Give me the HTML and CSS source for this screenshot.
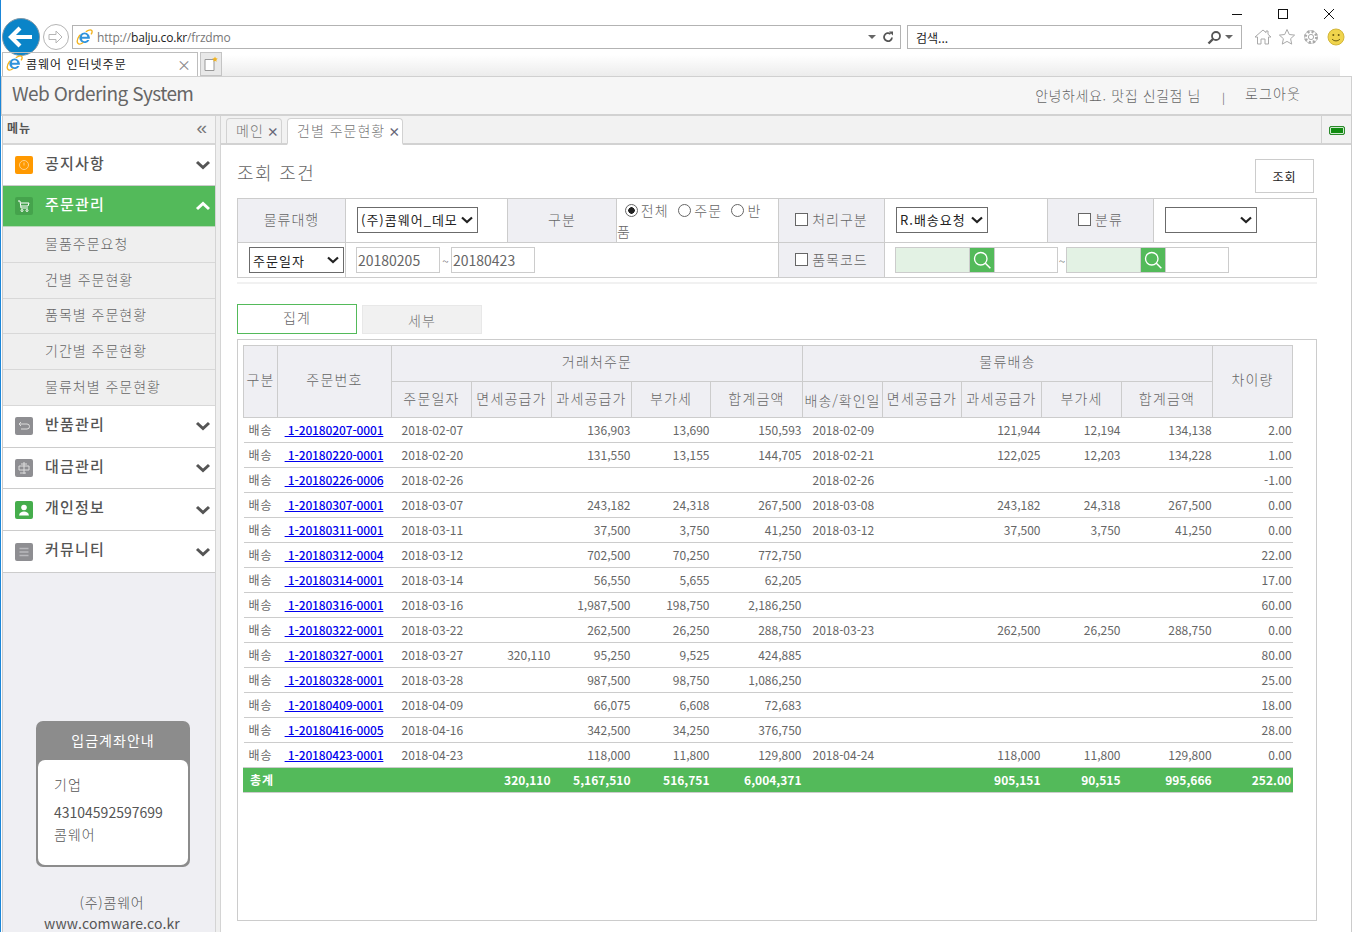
FILE: index.html
```html
<!DOCTYPE html>
<html lang="ko">
<head>
<meta charset="utf-8">
<title>콤웨어 인터넷주문</title>
<link rel="stylesheet" href="styles.css">
</head>
<body>
<svg class="defs" width="0" height="0" aria-hidden="true">
  <symbol id="ie" viewBox="0 0 20 20">
    <path d="M16 11.500H7a3.200 3.200 0 0 0 6 1.300h2.800A6.200 6.200 0 1 1 16.300 9.700v1.800zM7 9.200h6.200a3.100 3.100 0 0 0-6.200 0z" fill="#2f93dc"/>
    <path d="M4.600 6.800C1.800 10.800.8 15 2.200 16.800c1.200 1.500 3.800.8 6.200-1M11.500 3.200c3-1.900 5.900-2.600 7-1.400.8.900.4 2.700-.8 4.600" fill="none" stroke="#f2b21c" stroke-width="1.600"/>
  </symbol>
  <symbol id="chev" viewBox="0 0 16 10">
    <path d="M2 2l6 5.500L14 2" fill="none" stroke="currentColor" stroke-width="3"/>
  </symbol>
  <symbol id="lens" viewBox="0 0 24 24">
    <circle cx="10.500" cy="10.500" r="7.500" fill="none" stroke="#fff" stroke-width="1.600"/>
    <path d="M16 16l6 6" stroke="#fff" stroke-width="1.800"/>
  </symbol>
</svg>

<div class="page">
  <div class="winbar">
    <span class="cap"><svg width="12" height="12" viewBox="0 0 12 12"><path d="M1 6.500h10" stroke="#111"/></svg></span>
    <span class="cap"><svg width="12" height="12" viewBox="0 0 12 12"><rect x="1.500" y="1.500" width="9" height="9" fill="none" stroke="#111"/></svg></span>
    <span class="cap"><svg width="12" height="12" viewBox="0 0 12 12"><path d="M1 1l10 10M11 1L1 11" stroke="#111"/></svg></span>
  </div>

  <div class="navrow">
    <span class="back"><svg width="26" height="22" viewBox="0 0 26 22"><path d="M12 2L3 11l9 9M3.500 11H24" fill="none" stroke="#fff" stroke-width="4.200"/></svg></span>
    <span class="forward"><svg width="18" height="16" viewBox="0 0 18 16"><path d="M9 2l6 6-6 6v-3.500H2v-5h7z" fill="#fff" stroke="#b5b5b5"/></svg></span>
    <div class="addr">
      <svg class="ie-icon" width="17" height="17"><use href="#ie"/></svg>
      <span class="url">http://<b>balju.co.kr</b>/frzdmo</span>
      <span class="addr-tools"><i class="caret"></i><svg width="12" height="12" viewBox="0 0 12 12"><path d="M10 6.500A4 4 0 1 1 8.500 3" fill="none" stroke="#555" stroke-width="1.800"/><path d="M7 .5h4v4z" fill="#555"/></svg></span>
    </div>
    <div class="search">
      <span>검색...</span>
      <span class="addr-tools"><svg width="15" height="15" viewBox="0 0 15 15"><circle cx="9" cy="6" r="4" fill="none" stroke="#555" stroke-width="1.800"/><path d="M6 9l-4.500 4.500" stroke="#555" stroke-width="2.400"/></svg><i class="caret"></i></span>
    </div>
    <div class="tools">
      <svg width="18" height="18" viewBox="0 0 18 18"><path d="M1 9l8-7 3 2.600V3h2v3.300L17 9h-2.500v7H11v-5H7v5H3.500V9z" fill="#fff" stroke="#a9a9a9"/></svg>
      <svg width="18" height="18" viewBox="0 0 18 18"><path d="M9 1.500l2.300 5 5.300.6-4 3.600 1.100 5.400L9 13.400l-4.700 2.700 1.100-5.400-4-3.600 5.300-.6z" fill="#fff" stroke="#a9a9a9"/></svg>
      <svg width="18" height="18" viewBox="0 0 18 18"><circle cx="9" cy="9" r="5.500" fill="none" stroke="#a9a9a9" stroke-width="2.800" stroke-dasharray="2.200 2.100"/><circle cx="9" cy="9" r="6.400" fill="none" stroke="#a9a9a9" stroke-width=".7"/><circle cx="9" cy="9" r="2.600" fill="#fff" stroke="#a9a9a9"/></svg>
      <svg width="18" height="18" viewBox="0 0 18 18"><circle cx="9" cy="9" r="8" fill="#f0d44c" stroke="#d3b63a"/><circle cx="6.300" cy="7" r="1" fill="#6b5b10"/><circle cx="11.700" cy="7" r="1" fill="#6b5b10"/><path d="M5 11c2 2.500 6 2.500 8 0" fill="none" stroke="#6b5b10"/></svg>
    </div>
  </div>

  <div class="tabrow">
    <div class="ietab">
      <svg width="17" height="17"><use href="#ie"/></svg>
      <span class="ietab-text">콤웨어 인터넷주문</span>
      <span class="ietab-x">×</span>
    </div>
    <div class="newtab"><svg width="16" height="16" viewBox="0 0 16 16"><path d="M2 3.500h9v11H2z" fill="#fff" stroke="#999"/><path d="M12 .5l.8 1.800 1.900.3-1.400 1.300.4 1.900-1.700-1-1.700 1 .4-1.900-1.400-1.300 1.900-.3z" fill="#f2b21c"/></svg></div>
    <div class="tabshade"></div>
  </div>

  <header class="apphead">
    <div class="brand">Web Ordering System</div>
    <div class="user">
      <span class="hello">안녕하세요. 맛집 신길점 님</span>
      <span class="sep">|</span>
      <span class="logout">로그아웃</span>
    </div>
  </header>

  <div class="appbody">
    <aside class="side">
      <div class="side-head"><b>메뉴</b><span class="collapse">«</span></div>
      <nav class="menu">
        <a class="mi mi-short"><span class="mi-ico ico-orange"><svg width="12" height="12" viewBox="0 0 12 12"><circle cx="6" cy="6" r="4.500" fill="none" stroke="#ffd08a"/><path d="M6 3.500v3" stroke="#ffd08a"/></svg></span><span class="mi-label">공지사항</span><svg class="mi-chev" width="16" height="10"><use href="#chev"/></svg></a>
        <a class="mi mi-open"><span class="mi-ico ico-green"><svg width="14" height="14" viewBox="0 0 14 14"><path d="M1 2h2l1 7h7M3.500 4H12l-1 3H4" fill="none" stroke="#fff"/><circle cx="5" cy="11.500" r="1" fill="none" stroke="#fff"/><circle cx="10" cy="11.500" r="1" fill="none" stroke="#fff"/></svg></span><span class="mi-label">주문관리</span><svg class="mi-chev flip" width="16" height="10"><use href="#chev"/></svg></a>
        <a class="sub">물품주문요청</a>
        <a class="sub">건별 주문현황</a>
        <a class="sub">품목별 주문현황</a>
        <a class="sub">기간별 주문현황</a>
        <a class="sub">물류처별 주문현황</a>
        <a class="mi"><span class="mi-ico ico-gray"><svg width="14" height="14" viewBox="0 0 14 14"><path d="M4 10h6a2.500 2.500 0 0 0 0-5H2M4 3L2 5l2 2" fill="none" stroke="#ddd"/></svg></span><span class="mi-label">반품관리</span><svg class="mi-chev" width="16" height="10"><use href="#chev"/></svg></a>
        <a class="mi"><span class="mi-ico ico-gray"><svg width="14" height="14" viewBox="0 0 14 14"><path d="M7 1v12M2 5h10v4H2zM4 3h6M3 12h6" fill="none" stroke="#ddd"/></svg></span><span class="mi-label">대금관리</span><svg class="mi-chev" width="16" height="10"><use href="#chev"/></svg></a>
        <a class="mi"><span class="mi-ico ico-person"><svg width="14" height="14" viewBox="0 0 14 14"><circle cx="7" cy="4.500" r="2.800" fill="#fff"/><path d="M2 12.500c.5-3 2.500-4 5-4s4.500 1 5 4z" fill="#fff"/></svg></span><span class="mi-label">개인정보</span><svg class="mi-chev" width="16" height="10"><use href="#chev"/></svg></a>
        <a class="mi"><span class="mi-ico ico-gray"><svg width="14" height="14" viewBox="0 0 14 14"><path d="M2.500 3.500h9M2.500 7h9M2.500 10.500h9" stroke="#b9b9bd" stroke-width="1.600"/></svg></span><span class="mi-label">커뮤니티</span><svg class="mi-chev" width="16" height="10"><use href="#chev"/></svg></a>
      </nav>
      <div class="side-fill"></div>
      <section class="account">
        <h3>입금계좌안내</h3>
        <div class="account-body">
          <p class="a1">기업</p>
          <p class="a2">43104592597699</p>
          <p class="a3">콤웨어</p>
        </div>
      </section>
      <div class="corp">
        <div class="corp-name">(주)콤웨어</div>
        <div class="corp-url">www.comware.co.kr</div>
      </div>
    </aside>

    <div class="splitter"></div>

    <main class="main">
      <div class="tabbar">
        <div class="ptab ptab-a">메인<i>×</i></div>
        <div class="ptab ptab-b ptab-on">건별 주문현황<i>×</i></div>
        <div class="tabfill"></div>
        <div class="panelbtn"><span class="led"></span></div>
      </div>

      <div class="content">
        <div class="titlerow">
          <h2>조회 조건</h2>
          <button class="qbtn" type="button">조회</button>
        </div>

        <table class="filter">
          <colgroup><col class="f1"><col class="f2"><col class="f3"><col class="f4"><col class="f5"><col class="f6"><col class="f7"><col class="f8"></colgroup>
          <tr class="fr1">
            <th>물류대행</th>
            <td class="pl"><select class="sel sel-a"><option>(주)콤웨어_데모</option></select></td>
            <th>구분</th>
            <td class="radios">&nbsp;&nbsp;<input type="radio" name="k" checked><span>전체</span>&nbsp;&nbsp;<input type="radio" name="k"><span>주문</span>&nbsp;&nbsp;<input type="radio" name="k"><span>반</span><br>품</td>
            <th><input type="checkbox"><span>처리구분</span></th>
            <td class="pl"><select class="sel sel-b"><option>R.배송요청</option></select></td>
            <th><input type="checkbox"><span>분류</span></th>
            <td class="pl"><select class="sel sel-c"><option></option></select></td>
          </tr>
          <tr class="fr2">
            <td class="datecell"><select class="sel sel-d"><option>주문일자</option></select></td>
            <td colspan="3" class="dates"><input class="date" value="20180205"><span class="tilde">~</span><input class="date" value="20180423"></td>
            <th><input type="checkbox"><span>품목코드</span></th>
            <td colspan="3" class="codes">
              <div class="code"><span class="code-a"></span><span class="code-btn"><svg width="20" height="20"><use href="#lens"/></svg></span><span class="code-b"></span></div><span class="tilde">~</span><div class="code"><span class="code-a"></span><span class="code-btn"><svg width="20" height="20"><use href="#lens"/></svg></span><span class="code-b"></span></div>
            </td>
          </tr>
        </table>
        <div class="rule"></div>

        <div class="viewtabs">
          <div class="vt vt-on">집계</div>
          <div class="vt vt-off">세부</div>
        </div>

        <div class="gridbox">
          <table class="grid">
            <colgroup>
              <col class="c34"><col class="c114"><col class="c80"><col class="c80"><col class="c80"><col class="c79"><col class="c92"><col class="c80"><col class="c79"><col class="c80"><col class="c80"><col class="c91"><col class="c80">
            </colgroup>
            <thead>
              <tr class="h1">
                <th rowspan="2">구분</th><th rowspan="2">주문번호</th><th colspan="5">거래처주문</th><th colspan="5">물류배송</th><th rowspan="2">차이량</th>
              </tr>
              <tr class="h2">
                <th>주문일자</th><th>면세공급가</th><th>과세공급가</th><th>부가세</th><th>합계금액</th>
                <th class="tight">배송/확인일</th><th>면세공급가</th><th>과세공급가</th><th>부가세</th><th>합계금액</th>
              </tr>
            </thead>
            <tbody>
              <tr><td class="k">배송</td><td class="no"><a>&nbsp;1-20180207-0001</a></td><td class="d">2018-02-07</td><td></td><td>136,903</td><td>13,690</td><td>150,593</td><td class="d">2018-02-09</td><td></td><td>121,944</td><td>12,194</td><td>134,138</td><td>2.00</td></tr>
              <tr><td class="k">배송</td><td class="no"><a>&nbsp;1-20180220-0001</a></td><td class="d">2018-02-20</td><td></td><td>131,550</td><td>13,155</td><td>144,705</td><td class="d">2018-02-21</td><td></td><td>122,025</td><td>12,203</td><td>134,228</td><td>1.00</td></tr>
              <tr><td class="k">배송</td><td class="no"><a>&nbsp;1-20180226-0006</a></td><td class="d">2018-02-26</td><td></td><td></td><td></td><td></td><td class="d">2018-02-26</td><td></td><td></td><td></td><td></td><td>-1.00</td></tr>
              <tr><td class="k">배송</td><td class="no"><a>&nbsp;1-20180307-0001</a></td><td class="d">2018-03-07</td><td></td><td>243,182</td><td>24,318</td><td>267,500</td><td class="d">2018-03-08</td><td></td><td>243,182</td><td>24,318</td><td>267,500</td><td>0.00</td></tr>
              <tr><td class="k">배송</td><td class="no"><a>&nbsp;1-20180311-0001</a></td><td class="d">2018-03-11</td><td></td><td>37,500</td><td>3,750</td><td>41,250</td><td class="d">2018-03-12</td><td></td><td>37,500</td><td>3,750</td><td>41,250</td><td>0.00</td></tr>
              <tr><td class="k">배송</td><td class="no"><a>&nbsp;1-20180312-0004</a></td><td class="d">2018-03-12</td><td></td><td>702,500</td><td>70,250</td><td>772,750</td><td class="d"></td><td></td><td></td><td></td><td></td><td>22.00</td></tr>
              <tr><td class="k">배송</td><td class="no"><a>&nbsp;1-20180314-0001</a></td><td class="d">2018-03-14</td><td></td><td>56,550</td><td>5,655</td><td>62,205</td><td class="d"></td><td></td><td></td><td></td><td></td><td>17.00</td></tr>
              <tr><td class="k">배송</td><td class="no"><a>&nbsp;1-20180316-0001</a></td><td class="d">2018-03-16</td><td></td><td>1,987,500</td><td>198,750</td><td>2,186,250</td><td class="d"></td><td></td><td></td><td></td><td></td><td>60.00</td></tr>
              <tr><td class="k">배송</td><td class="no"><a>&nbsp;1-20180322-0001</a></td><td class="d">2018-03-22</td><td></td><td>262,500</td><td>26,250</td><td>288,750</td><td class="d">2018-03-23</td><td></td><td>262,500</td><td>26,250</td><td>288,750</td><td>0.00</td></tr>
              <tr><td class="k">배송</td><td class="no"><a>&nbsp;1-20180327-0001</a></td><td class="d">2018-03-27</td><td>320,110</td><td>95,250</td><td>9,525</td><td>424,885</td><td class="d"></td><td></td><td></td><td></td><td></td><td>80.00</td></tr>
              <tr><td class="k">배송</td><td class="no"><a>&nbsp;1-20180328-0001</a></td><td class="d">2018-03-28</td><td></td><td>987,500</td><td>98,750</td><td>1,086,250</td><td class="d"></td><td></td><td></td><td></td><td></td><td>25.00</td></tr>
              <tr><td class="k">배송</td><td class="no"><a>&nbsp;1-20180409-0001</a></td><td class="d">2018-04-09</td><td></td><td>66,075</td><td>6,608</td><td>72,683</td><td class="d"></td><td></td><td></td><td></td><td></td><td>18.00</td></tr>
              <tr><td class="k">배송</td><td class="no"><a>&nbsp;1-20180416-0005</a></td><td class="d">2018-04-16</td><td></td><td>342,500</td><td>34,250</td><td>376,750</td><td class="d"></td><td></td><td></td><td></td><td></td><td>28.00</td></tr>
              <tr><td class="k">배송</td><td class="no"><a>&nbsp;1-20180423-0001</a></td><td class="d">2018-04-23</td><td></td><td>118,000</td><td>11,800</td><td>129,800</td><td class="d">2018-04-24</td><td></td><td>118,000</td><td>11,800</td><td>129,800</td><td>0.00</td></tr>
            </tbody>
            <tfoot>
              <tr><td class="k">총계</td><td></td><td></td><td>320,110</td><td>5,167,510</td><td>516,751</td><td>6,004,371</td><td></td><td></td><td>905,151</td><td>90,515</td><td>995,666</td><td>252.00</td></tr>
            </tfoot>
          </table>
        </div>
      </div>
    </main>
  </div>
</div>
</body>
</html>
```
FILE: styles.css
```css
* { box-sizing: border-box; }
html, body { margin: 0; padding: 0; height: 932px; overflow: hidden; background: #fff; }
body { font-family: "Noto Sans CJK KR", "Noto Sans", sans-serif; font-size: 12px; color: #666; }
.defs { display: block; height: 0; }
.page { width: 1352px; height: 932px; border-left: 1px solid #1b86d8; display: flex; flex-direction: column; overflow: hidden; }

/* browser chrome */
.winbar { height: 19px; flex: none; display: flex; justify-content: flex-end; align-items: center; padding: 8px 0 0; }
.cap { width: 46px; display: flex; justify-content: center; line-height: 0; margin-top: 0; }
.navrow { height: 33px; flex: none; display: flex; align-items: center; }
.back { width: 38px; height: 38px; flex: none; border-radius: 50%; background: #0a84c8; border: 1px solid #7f98a8; display: flex; align-items: center; justify-content: center; margin: 3px 0 0 1px; }
.forward { width: 26px; height: 26px; flex: none; margin: 3px 3px 0 3px; border-radius: 50%; border: 1px solid #b5b5b5; display: flex; align-items: center; justify-content: center; }
.addr { width: 829px; height: 24px; flex: none; margin-top: 3px; border: 1px solid #b3b3b3; display: flex; align-items: center; padding: 0 6px 0 3px; }
.ie-icon { flex: none; }
.url { margin-left: 4px; font-family: "Open Sans", "Noto Sans", sans-serif; font-size: 12px; letter-spacing: -.17px; color: #777; }
.url b { font-weight: 400; color: #222; }
.addr-tools { margin-left: auto; display: flex; align-items: center; gap: 6px; }
.caret { display: inline-block; width: 0; height: 0; border: 4px solid transparent; border-top: 4px solid #666; border-bottom: 0; }
.search { width: 335px; height: 24px; flex: none; margin: 3px 0 0 6px; border: 1px solid #b3b3b3; display: flex; align-items: center; padding: 0 8px; font-size: 12px; color: #222; }
.search .addr-tools { gap: 3px; }
.tools { display: flex; gap: 6.200px; margin-left: 12px; margin-top: 2px; line-height: 0; }
.tabrow { height: 24px; flex: none; display: flex; align-items: stretch; padding-left: 1px; }
.ietab { width: 196px; border: 1px solid #bdbdbd; border-bottom: 0; display: flex; align-items: center; padding: 0 3px 2px 3px; gap: 3px; }
.ietab-text { font-size: 12px; color: #222; letter-spacing: 1px; }
.ietab-x { margin-left: auto; color: #888; font-size: 14px; line-height: 1; padding-right: 3px; }
.newtab { width: 22px; margin-left: 2px; background: #e8e8e8; border: 1px solid #c4c4c4; display: flex; align-items: center; justify-content: center; }
.tabshade { flex: 1; margin: 3px 12px 0 0; background: linear-gradient(#fff, #ececec); }

/* app header */
.apphead { height: 40px; flex: none; background: #f6f6f6; border: 1px solid #d0d0d0; border-width: 1px 1px 2px 1px; border-bottom-color: #d2d2d2; display: flex; align-items: center; padding-left: 10px; }
.brand { font-size: 19px; letter-spacing: -.6px; color: #666; margin-bottom: 6px; }
.user { margin-left: auto; display: flex; align-items: center; font-size: 14px; color: #666; padding-right: 50px; }
.hello { margin-bottom: 2px; letter-spacing: .6px; font-weight: 300; }
.sep { margin: 3px 20px 0 21px; font-size: 11px; color: #777; }
.logout { margin-bottom: 6px; letter-spacing: 1.1px; font-weight: 300; }

.appbody { flex: 1; min-height: 0; display: flex; padding-left: 1px; }

/* sidebar */
.side { width: 213px; flex: none; background: #efeff3; border-left: 1px solid #ccc; display: flex; flex-direction: column; }
.side-head { height: 29px; flex: none; display: flex; align-items: center; justify-content: space-between; padding: 0 8px 5px 4px; background: #f3f3f3; border-bottom: 2px solid #d6d6d6; font-size: 12px; color: #555; }
.side-head b { letter-spacing: 1px; }
.collapse { font-size: 19px; line-height: 1; color: #777; font-family: "Liberation Sans", sans-serif; }
.menu { flex: none; background: #fff; }
.mi { height: 41.750px; display: flex; align-items: center; padding: 0 4px 0 12px; border-bottom: 1px solid #ccc; background: #fff; color: #555; }
.mi-short { height: 41px; }
.mi-open { height: 41px; background: #53ba5a; color: #fff; border-bottom-color: #b8d8b8; }
.mi-ico { width: 18px; height: 18px; flex: none; border-radius: 2px; display: flex; align-items: center; justify-content: center; }
.ico-orange { background: #ff9900; }
.ico-green { background: #45a34c; }
.ico-gray { background: #8e8e92; }
.ico-person { background: #45ad4c; }
.mi-label { margin: 0 0 6px 12px; font-size: 15px; font-weight: 500; letter-spacing: 1.2px; }
.mi-chev { margin-left: auto; }
.flip { transform: rotate(180deg); color: #fff; }
.sub { height: 35.800px; display: flex; align-items: center; padding: 0 0 3px 42px; background: #efefef; border-bottom: 1px solid #d8d8d8; font-size: 14px; font-weight: 300; color: #666; letter-spacing: 1px; }
.side-fill { flex: 1; }
.account { width: 154px; height: 146px; flex: none; margin: 0 0 25px 33px; background: #8c8c8c; border-radius: 7px; padding: 0 2px 2px; display: flex; flex-direction: column; }
.account h3 { margin: 0; height: 39px; flex: none; display: flex; align-items: center; justify-content: center; padding-bottom: 2px; font-size: 14px; font-weight: 400; color: #fff; letter-spacing: 1px; }
.account-body { flex: 1; background: #fff; border-radius: 7px; padding: 14px 0 0 16px; color: #555; font-size: 14px; }
.account-body p { margin: 0; line-height: 20px; }
.a1, .a3 { letter-spacing: 1px; font-weight: 300; }
.a2 { margin-top: 8px !important; }
.a3 { margin-top: 2px !important; }
.corp { flex: none; height: 40px; padding-left: 6px; text-align: center; font-size: 14px; color: #555; }
.corp-name { line-height: 20px; letter-spacing: .8px; font-weight: 300; }
.corp-url { margin-top: 2px; line-height: 18px; letter-spacing: .1px; }

.splitter { width: 6px; flex: none; background: #efefef; border: 1px solid #d4d4d4; border-width: 0 1px; }

/* main */
.main { width: 1131px; flex: none; display: flex; flex-direction: column; border-right: 1px solid #ccc; }
.tabbar { height: 29px; flex: none; display: flex; align-items: flex-end; background: #f2f2f2; border-bottom: 2px solid #d2d2d2; padding-left: 5px; }
.ptab { height: 27px; margin-bottom: -2px; margin-right: 5px; padding: 0 0 2px 9px; border: 1px solid #d2d2d2; border-bottom: 2px solid #d2d2d2; border-radius: 4px 4px 0 0; font-size: 14px; font-weight: 300; color: #777; letter-spacing: 1px; display: flex; align-items: center; gap: 3px; }
.ptab i { font-style: normal; font-weight: 700; font-size: 12px; color: #667; letter-spacing: 0; margin-top: 2px; }
.ptab-a { width: 56px; }
.ptab-b { width: 116px; }
.ptab-on { background: #fff; border-bottom-color: #fff; }
.tabfill { flex: 1; }
.panelbtn { width: 30px; height: 27px; border-left: 1px solid #d2d2d2; display: flex; align-items: center; justify-content: center; padding-top: 2px; }
.led { width: 16px; height: 9px; background: #128c12; border: 1px solid #2a8a2a; box-shadow: inset 0 0 0 1px #cfe8cf; border-radius: 2px; }

.content { flex: 1; min-height: 0; padding: 0 34px 0 16px; }
.titlerow { height: 53px; display: flex; justify-content: space-between; }
.titlerow h2 { margin: 15px 0 0; font-size: 18px; font-weight: 300; color: #666; line-height: 24px; letter-spacing: 1.4px; }
.qbtn { margin: 14px 3px 0 0; width: 59px; height: 34px; background: #fff; border: 1px solid #ccc; font: 12px "Noto Sans CJK KR", sans-serif; letter-spacing: 1px; color: #222; padding: 0; }

.filter { width: 1079px; table-layout: fixed; border-collapse: collapse; border: 1px solid #ccc; }
.f1 { width: 108px; } .f2 { width: 162px; } .f3 { width: 109px; } .f4 { width: 162px; }
.f5 { width: 106px; } .f6 { width: 163px; } .f7 { width: 106px; } .f8 { width: 163px; }
.filter th, .filter td { border: 1px solid #ccc; padding: 0; font-size: 14px; font-weight: 300; color: #666; }
.filter th { background: #efeff3; text-align: center; letter-spacing: 1px; }
.fr1 th { padding-bottom: 4px; }
.fr2 th { padding-bottom: 2px; }
.fr1 { height: 44px; }
.fr2 { height: 35px; }
.fr1 .pl { padding-bottom: 2px; }
.pl { padding-left: 11px !important; }
.radios { line-height: 21px; }
.radios span { letter-spacing: 1.1px; margin-right: 1.500px; }
.sel { appearance: none; -webkit-appearance: none; height: 26px; border: 1px solid #6b6b6b; border-radius: 0; padding: 0 0 0 3px; font: 13px "Noto Sans CJK KR", sans-serif; letter-spacing: 1px; color: #222; background: #fff url("data:image/svg+xml;utf8,<svg xmlns='http://www.w3.org/2000/svg' width='12' height='8'><path d='M1 1.500l5 4.500 5-4.500' fill='none' stroke='%23222' stroke-width='2.200'/></svg>") no-repeat right 4px center; vertical-align: middle; }
.sel-a { width: 121px; }
.sel-b { width: 92px; }
.sel-c { width: 92px; }
.sel-d { width: 95px; }
.datecell { padding-left: 11px !important; }
.dates { padding-left: 10px !important; }
.date { width: 84px; height: 26px; border: 1px solid #ccc; padding: 0 1px; font: 14px "Noto Sans CJK KR", sans-serif; color: #666; vertical-align: middle; }
.tilde { font-size: 12px; display: inline-block; width: 8px; text-align: center; vertical-align: middle; color: #666; }
.dates .tilde { width: 11px; }
input[type=radio] { appearance: none; -webkit-appearance: none; width: 13px; height: 13px; margin: 0 3px 0 0; border: 1px solid #666; border-radius: 50%; vertical-align: -1px; background: #fff; }
input[type=radio]:checked { background: radial-gradient(circle, #222 0 3px, #fff 3.500px); }
input[type=checkbox] { appearance: none; -webkit-appearance: none; width: 13px; height: 13px; margin: 0 4px 0 0; border: 1px solid #666; background: #fff; vertical-align: -1px; }
.codes { padding-left: 10px !important; font-size: 0 !important; }
.code { display: inline-flex; width: 163px; height: 26px; vertical-align: middle; border: 1px solid #ccc; }
.code-a { width: 73px; background: #e3f2e4; }
.code-btn { width: 26px; background: #53ba5a; border: 1px solid #ccc; border-width: 0 1px; display: flex; align-items: center; justify-content: center; }
.code-b { flex: 1; background: #fff; }
.rule { width: 1080px; height: 2px; margin-top: 4px; background: #f1f1f1; }

.viewtabs { display: flex; gap: 5px; height: 31px; margin-top: 20px; align-items: flex-start; }
.vt { width: 120px; font-size: 14px; font-weight: 300; letter-spacing: 1px; display: flex; align-items: center; justify-content: center; }
.vt-on { height: 30px; background: #fff; border: 1px solid #53ba5a; color: #666; padding-bottom: 4px; }
.vt-off { height: 29px; margin-top: 1px; background: #f1f1f1; border: 1px solid #e8e8e8; color: #777; }

.gridbox { width: 1080px; height: 582px; margin-top: 4px; border: 1px solid #ccc; padding: 5px; }
.grid { width: 1049px; table-layout: fixed; border-collapse: collapse; font-size: 12px; color: #666; }
.c34 { width: 34px; } .c114 { width: 114px; } .c80 { width: 80px; } .c79 { width: 79px; } .c92 { width: 92px; } .c91 { width: 91px; }
.grid th { background: #efeff3; border: 1px solid #ccc; padding: 0 0 5px; font-size: 14px; font-weight: 300; color: #666; letter-spacing: 1.2px; text-align: center; white-space: nowrap; overflow: hidden; }
.h1 { height: 36px; }
.h2 { height: 36px; }
.h1 th[colspan] { padding-bottom: 6px; }
.h2 th { padding-bottom: 4px; }
.grid th.tight { letter-spacing: 1px; padding-bottom: 0; }
.grid td { height: 25px; padding: 0 1px 2px 0; border-bottom: 1px solid #ccc; text-align: right; white-space: nowrap; overflow: hidden; }
.grid td.k { text-align: center; letter-spacing: 1px; padding-right: 0; }
.grid td.d { text-align: left; padding-left: 10px; padding-right: 0; }
.grid td.no { text-align: center; }
.no a { color: #0000ee; text-decoration: underline; font-weight: 500; letter-spacing: -.13px; }
.grid tfoot td { background: #53ba5a; color: #fff; font-weight: 700; border-bottom-color: #ccc; }
.grid tfoot td.k { text-align: left; padding-left: 6px; border-left: 1px solid #53ba5a; }
.grid tfoot td:last-child { border-right: 1px solid #53ba5a; }
```
